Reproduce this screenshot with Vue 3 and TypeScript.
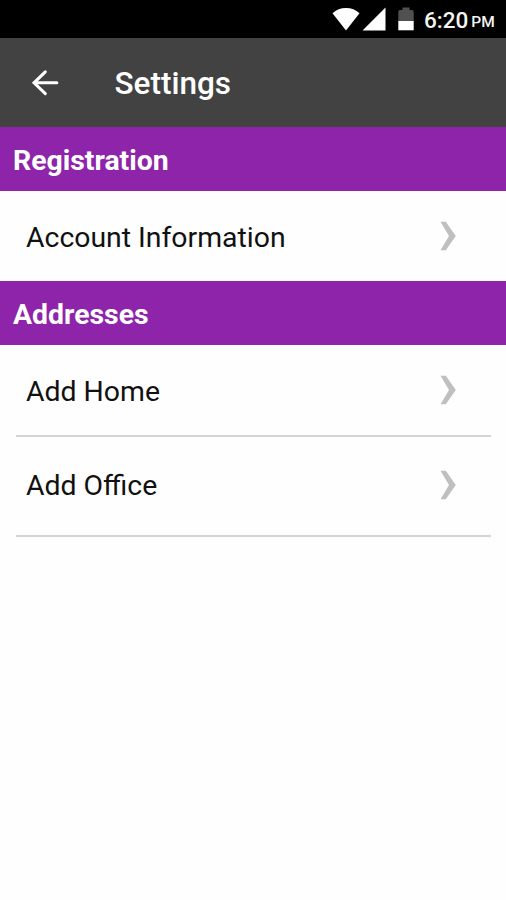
<script setup lang="ts">
interface SettingsItem {
  label: string
  divided: boolean
  size: string
}

interface SettingsSection {
  title: string
  items: SettingsItem[]
}

const sections: SettingsSection[] = [
  {
    title: 'Registration',
    items: [{ label: 'Account Information', divided: false, size: 'regular' }],
  },
  {
    title: 'Addresses',
    items: [
      { label: 'Add Home', divided: true, size: 'regular' },
      { label: 'Add Office', divided: true, size: 'tall' },
    ],
  },
]
</script>

<template>
  <div class="screen">
    <div class="status-bar">
      <svg class="wifi" viewBox="0 0 28 24" aria-hidden="true">
        <path d="M14 23.5 L0.5 6.2 Q6 1 14 1 Q22 1 27.5 6.2 Z" />
      </svg>
      <svg class="signal" viewBox="0 0 24 24" aria-hidden="true">
        <path d="M0.5 23.5 L23.5 0.5 V23.5 Z" />
      </svg>
      <svg class="battery" viewBox="0 0 16 24" aria-hidden="true">
        <path class="battery-empty" d="M4.5 0.5 H11.5 V3 H14 Q15.7 3 15.7 4.7 V14 H0.3 V4.7 Q0.3 3 2 3 H4.5 Z" />
        <path d="M0.3 14 H15.7 V23.3 H0.3 Z" />
      </svg>
      <span class="clock">6:20</span>
      <span class="meridiem">PM</span>
    </div>

    <header class="app-bar">
      <button class="back" type="button" aria-label="Back">
        <svg viewBox="0 0 28 28" aria-hidden="true">
          <path d="M25.9 13.8 H3 M14.3 2.9 L3 13.8 L14.3 24.7" />
        </svg>
      </button>
      <h1>Settings</h1>
    </header>

    <section v-for="section in sections" :key="section.title">
      <h2>{{ section.title }}</h2>
      <ul>
        <li
          v-for="item in section.items"
          :key="item.label"
          :class="[item.size, { divided: item.divided }]"
        >
          <span class="label">{{ item.label }}</span>
          <svg class="chevron" viewBox="0 0 16 30" aria-hidden="true">
            <path d="M0.5 0.8 H5.8 L15.8 15 L5.8 29.2 H0.5 L9 15 Z" />
          </svg>
        </li>
      </ul>
    </section>
  </div>
</template>

<style>
body {
  margin: 0;
  background: #fff;
}
</style>

<style scoped>
.screen {
  width: 506px;
  height: 900px;
  overflow: hidden;
  background: #fefefe;
  color: #111;
  font-family: Roboto, 'Liberation Sans', sans-serif;
}

.status-bar {
  display: flex;
  align-items: center;
  height: 38px;
  padding-left: 332px;
  background: #000;
  color: #f4f4f4;
}

.status-bar svg {
  flex: none;
  height: 24px;
  fill: #fff;
}

.wifi {
  width: 28px;
}

.signal {
  width: 24px;
  margin-left: 2px;
}

.battery {
  width: 16px;
  margin-left: 12px;
}

.status-bar .battery-empty {
  fill: #505050;
}

.clock {
  margin-left: 10px;
  padding-top: 3px;
  font-size: 22.5px;
  font-weight: 500;
  line-height: 35px;
}

.meridiem {
  margin-left: 3px;
  padding-top: 6px;
  font-size: 15.5px;
  font-weight: 500;
}

.app-bar {
  display: flex;
  align-items: center;
  height: 89px;
  padding-left: 31px;
  box-sizing: border-box;
  background: #424242;
  color: #fff;
}

.back {
  width: 28px;
  height: 28px;
  padding: 0;
  border: 0;
  background: none;
}

.back svg {
  display: block;
  fill: none;
  stroke: #fff;
  stroke-width: 3;
  stroke-linecap: round;
}

h1 {
  margin: 2px 0 0 55.5px;
  font-size: 31.5px;
  font-weight: 500;
  line-height: 40px;
}

h2 {
  height: 64px;
  margin: 0;
  padding: 2px 0 0 13px;
  box-sizing: border-box;
  background: #8e24aa;
  color: #fff;
  font-size: 28.4px;
  font-weight: 700;
  line-height: 64px;
}

ul {
  margin: 0;
  padding: 0 15px 0 16px;
  list-style: none;
}

li {
  display: flex;
  align-items: center;
  justify-content: space-between;
  box-sizing: border-box;
  padding: 0 35px 0 10px;
}

.regular {
  height: 90px;
}

.tall {
  height: 100px;
  padding-bottom: 3px;
}

.regular.divided {
  height: 92px;
}

.divided {
  border-bottom: 2px solid #d4d4d4;
}

.label {
  padding-top: 3px;
  font-size: 28.4px;
  font-weight: 400;
  line-height: 36px;
}

.chevron {
  width: 16px;
  height: 30px;
  fill: #bec0c0;
}
</style>
